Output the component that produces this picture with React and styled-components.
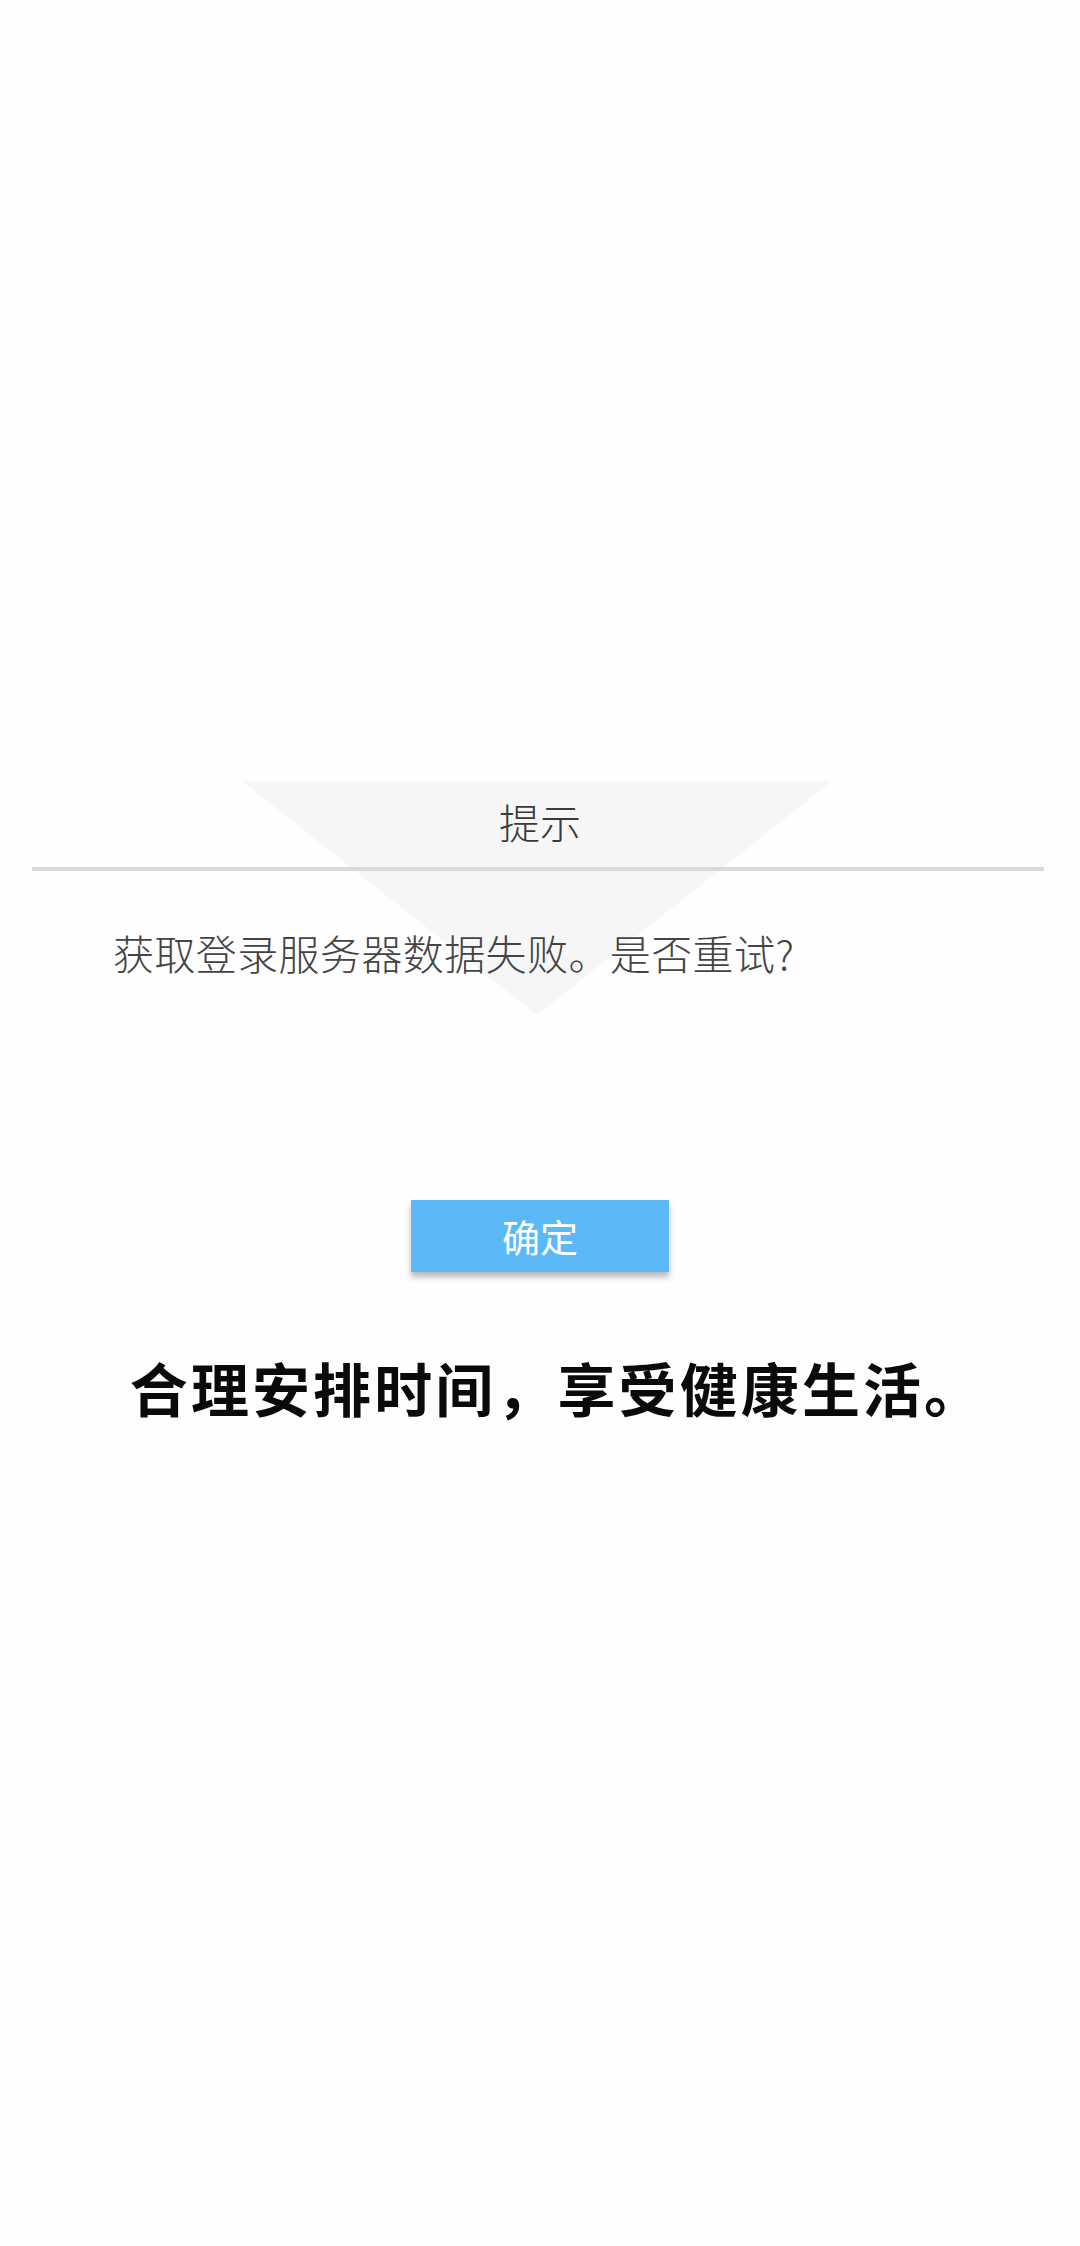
import React from "react"
import styled, { createGlobalStyle } from "styled-components"

const GlobalStyle = createGlobalStyle`
  html, body {
    margin: 0;
    padding: 0;
    background: #fefefe;
  }
  body {
    font-family: "Noto Sans CJK SC", "Noto Sans", sans-serif;
  }
`

const Page = styled.div`
  width: 1080px;
  height: 2246px;
  background: #fefefe;
  display: flex;
  flex-direction: column;
  padding-top: 781px;
  box-sizing: border-box;
`

const Dialog = styled.div`
  position: relative;
  display: flex;
  flex-direction: column;
`

const Backdrop = styled.svg`
  position: absolute;
  top: 0;
  left: 242px;
  width: 590px;
  height: 234px;
  z-index: 0;
`

const Title = styled.div`
  position: relative;
  height: 86px;
  line-height: 80px;
  text-align: center;
  font-size: 41px;
  color: #3a3a3a;
  font-weight: 300;
`

const Divider = styled.div`
  position: relative;
  height: 4px;
  margin: 0 36px 0 32px;
  background: #d9d9d9;
`

const Message = styled.div`
  position: relative;
  margin-top: 53px;
  padding-left: 113px;
  font-size: 41px;
  line-height: 56px;
  letter-spacing: 0.4px;
  color: #444;
  font-weight: 300;
`

const Actions = styled.div`
  display: flex;
  justify-content: center;
  margin-top: 220px;
`

const Button = styled.div`
  width: 258px;
  height: 72px;
  background: #5cb9f8;
  color: #fff;
  font-size: 38px;
  line-height: 72px;
  text-align: center;
  box-shadow: 0 5px 6px rgba(0, 0, 0, 0.28);
`

const Slogan = styled.div`
  margin-top: 75px;
  padding-left: 35px;
  text-align: center;
  font-size: 58px;
  line-height: 80px;
  font-weight: 600;
  color: #0a0a0a;
  letter-spacing: 3.1px;
`

export default function App() {
  return (
    <Page>
      <GlobalStyle />
      <Dialog>
        <Backdrop viewBox="0 0 590 234">
          <polygon points="0,0 590,0 295,234" fill="#f6f6f6" />
        </Backdrop>
        <Title>提示</Title>
        <Divider />
        <Message>获取登录服务器数据失败。是否重试?</Message>
      </Dialog>
      <Actions>
        <Button>确定</Button>
      </Actions>
      <Slogan>合理安排时间，享受健康生活。</Slogan>
    </Page>
  )
}
